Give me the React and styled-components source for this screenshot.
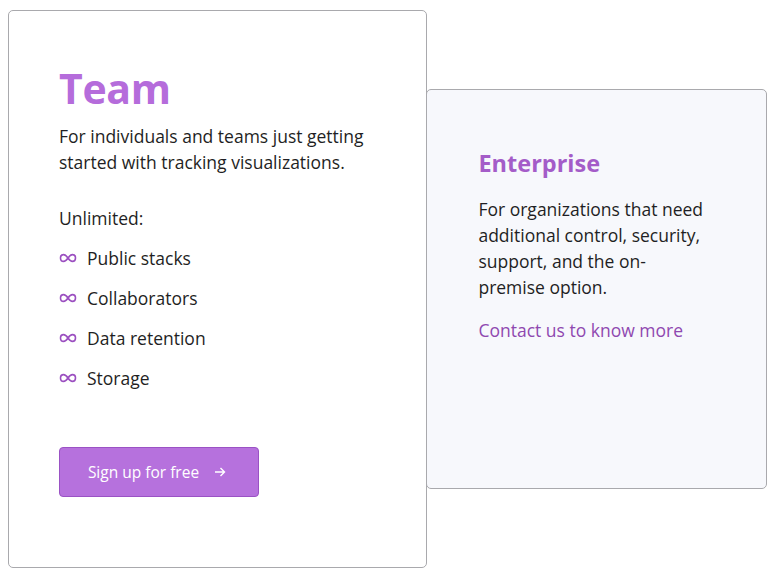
import React from 'react'
import styled, { createGlobalStyle } from 'styled-components'

const GlobalStyle = createGlobalStyle`
  body {
    margin: 0;
    background: #ffffff;
    font-family: "Open Sans", "Noto Sans", sans-serif;
    color: #1f1f24;
  }
`

const features = ['Public stacks', 'Collaborators', 'Data retention', 'Storage']

function Infinity() {
  return (
    <svg width="18" height="10" viewBox="0 0 18 10" fill="none">
      <path
        d="M9 5C7.6 3 6.3 1.6 4.6 1.6 2.8 1.6 1.5 3.1 1.5 5s1.3 3.4 3.1 3.4C6.3 8.4 7.6 7 9 5zm0 0c1.4-2 2.7-3.4 4.4-3.4 1.8 0 3.1 1.5 3.1 3.4s-1.3 3.4-3.1 3.4C11.7 8.4 10.4 7 9 5z"
        stroke="#9b4fc0"
        strokeWidth="1.6"
      />
    </svg>
  )
}

function Arrow() {
  return (
    <svg width="12" height="12" viewBox="0 0 12 12" fill="none">
      <path d="M1 6h9.5M6.5 2l4 4-4 4" stroke="#ffffff" strokeWidth="1.4" />
    </svg>
  )
}

export default function App() {
  return (
    <>
      <GlobalStyle />
      <Page>
        <TeamCard>
          <TeamTitle>Team</TeamTitle>
          <Para>For individuals and teams just getting started with tracking visualizations.</Para>
          <Unlimited>Unlimited:</Unlimited>
          <FeatureList>
            {features.map((f) => (
              <Feature key={f}>
                <Infinity />
                <span>{f}</span>
              </Feature>
            ))}
          </FeatureList>
          <SignUp>
            Sign up for free
            <Arrow />
          </SignUp>
        </TeamCard>
        <EnterpriseCard>
          <EnterpriseTitle>Enterprise</EnterpriseTitle>
          <Para $width="228px">
            For organizations that need additional control, security, support, and the on-premise option.
          </Para>
          <ContactLink href="#">Contact us to know more</ContactLink>
        </EnterpriseCard>
      </Page>
    </>
  )
}

const Page = styled.div`
  display: flex;
  align-items: center;
  padding: 10px 8px;
`

const TeamCard = styled.div`
  position: relative;
  z-index: 1;
  box-sizing: border-box;
  width: 420px;
  height: 558px;
  padding: 53px 40px 0 50px;
  border: 1px solid #a9a9ad;
  border-radius: 5px;
  background: #ffffff;
  display: flex;
  flex-direction: column;
`

const TeamTitle = styled.h1`
  margin: 0 0 11px;
  font-size: 41px;
  line-height: 48px;
  font-weight: 700;
  color: #b56cdb;
  letter-spacing: -0.3px;
`

const Para = styled.p`
  margin: 0;
  font-size: 17.5px;
  line-height: 26px;
  color: #1f1f24;
  max-width: ${(p) => p.$width || 'none'};
`

const Unlimited = styled.div`
  margin-top: 30px;
  font-size: 17.5px;
  line-height: 26px;
`

const FeatureList = styled.ul`
  list-style: none;
  margin: 14px 0 0;
  padding: 0;
  display: flex;
  flex-direction: column;
  gap: 14px;
`

const Feature = styled.li`
  display: flex;
  align-items: center;
  gap: 10px;
  font-size: 17.5px;
  line-height: 26px;
`

const SignUp = styled.button`
  margin-top: 56px;
  box-sizing: border-box;
  width: 200px;
  height: 50px;
  display: flex;
  align-items: center;
  justify-content: center;
  gap: 15px;
  padding: 0 4px 0 0;
  border: 1px solid #9a52c4;
  border-radius: 4px;
  background: #b671dd;
  color: #ffffff;
  font-family: "Open Sans", "Noto Sans", sans-serif;
  font-size: 15.5px;
  cursor: pointer;
`

const EnterpriseCard = styled.div`
  box-sizing: border-box;
  width: 341px;
  height: 400px;
  margin-left: -1px;
  padding: 57px 40px 0 51px;
  border: 1px solid #a9a9ad;
  border-radius: 5px;
  background: #f7f8fc;
  display: flex;
  flex-direction: column;
`

const EnterpriseTitle = styled.h2`
  margin: 0 0 17px;
  font-size: 23.5px;
  line-height: 32px;
  font-weight: 700;
  color: #a45cc8;
`

const ContactLink = styled.a`
  margin-top: 17px;
  font-size: 17.5px;
  line-height: 26px;
  color: #8f48b0;
  text-decoration: none;
`
